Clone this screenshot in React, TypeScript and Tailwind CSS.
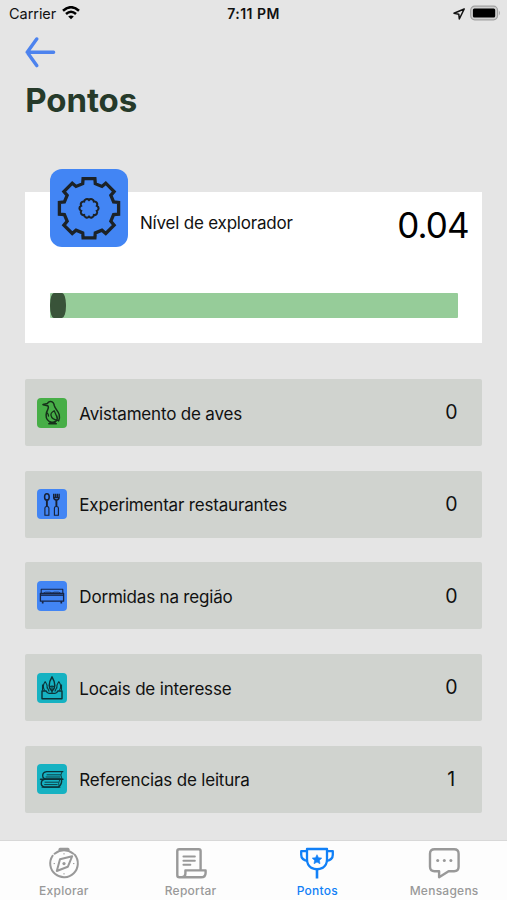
import * as React from "react";

// Outline of a toothed wheel, centered on cx/cy
const gearPath = (cx: number, cy: number, base: number, tip: number, half: number) => {
    const points: string[] = [];
    for (let i = 0; i < 8; i++) {
        const a = (i * Math.PI) / 4;
        [
            [-half, -base],
            [-half + 0.4, -tip],
            [half - 0.4, -tip],
            [half, -base],
        ].forEach(([x, y]) => {
            const px = cx + x * Math.cos(a) - y * Math.sin(a);
            const py = cy + x * Math.sin(a) + y * Math.cos(a);
            points.push(`${px.toFixed(2)} ${py.toFixed(2)}`);
        });
    }
    return `M${points.join("L")}Z`;
};

const scallopPath = (cx: number, cy: number, r: number, count: number) => {
    let d = "";
    for (let i = 0; i <= count; i++) {
        const a = (i * 2 * Math.PI) / count + Math.PI / count;
        const p = `${(cx + r * Math.cos(a)).toFixed(2)} ${(cy + r * Math.sin(a)).toFixed(2)}`;
        d += i === 0 ? `M${p}` : `A2.8 2.8 0 0 1 ${p}`;
    }
    return d + "Z";
};

const GearIcon = () => (
    <svg viewBox="0 0 78 78" className="w-full h-full" fill="none" stroke="#1c2227">
        <path d={gearPath(39, 39.3, 24.6, 29.6, 6.3)} strokeWidth="3.3" />
        <path d={scallopPath(39, 39.3, 8.3, 10)} strokeWidth="2.1" />
    </svg>
);

const BirdIcon = () => (
    <svg viewBox="0 0 30 30" className="w-full h-full" fill="none" stroke="#16301a" strokeWidth="1.5" strokeLinejoin="round" strokeLinecap="round">
        <path d="M6.2 6.600 10.300 5.600C11 3.900 12.400 3.300 13.800 3.500c2.200.3 3.200 2 3.500 4.200.5 2.600 3.900 5.300 4.900 8.900.5 2.200.3 4.500-.6 6.200" />
        <path d="M6.200 6.600c2 1.100 3.700.9 5 1.600 1 1.800-1 4-1.700 6.300-1 3.600.2 7.300 2.900 9.200 2.200.9 5 .7 6.600-.6 1.300-1.300 1.600-3.300.6-5.300" />
        <path d="M17.200 12.800c-2.400 1.300-3.600 2.700-3.200 4.600.4 2.200 3 4.500 7.400 5.300M9.900 14.700c1.300 1 1.700 2 1.600 3.300M17.200 12.800l2.100 4.800" strokeWidth="1.300" />
        <path d="M11.800 25.700h7.500M13.600 24l-.8 1.700M17.600 24l.9 1.700" />
    </svg>
);

const CutleryIcon = () => (
    <svg viewBox="0 0 30 30" className="w-full h-full" fill="none" stroke="#172033" strokeWidth="1.1">
        <ellipse cx="9.900" cy="7.900" rx="2.300" ry="3.200" strokeWidth="1.500" />
        <path d="M9.900 11.200v6.300" strokeWidth="1.900" />
        <path d="M7.900 26.200v-7.300q0-1.400 2-1.400t2 1.400v7.300z" />
        <path d="M16.700 4.800v3.600q0 2.400 2.700 2.600 2.700-.2 2.700-2.600V4.800M18.500 4.800v4M20.300 4.800v4M17 8.600h4.800" strokeWidth="1.400" />
        <path d="M19.400 11v6.500" strokeWidth="1.900" />
        <path d="M17.400 26.200v-7.300q0-1.400 2-1.400t2 1.400v7.300z" />
    </svg>
);

const BedIcon = () => (
    <svg viewBox="0 0 30 30" className="w-full h-full" fill="none" stroke="#172544" strokeWidth="1.100" strokeLinejoin="round">
        <path d="M4.200 12.500V8.200h21.600v4.300" />
        <path d="M3.400 12.300h23.200v7.900H3.400z" strokeWidth="1.300" />
        <path d="M3.600 14.100h22.800" strokeWidth="1.500" />
        <path d="M6.500 12l2-.8h4.500l2 .8 2-.8h4.500l2 .8" strokeWidth=".8" />
        <path d="M5.700 20.300v2.100M24.300 20.300v2.100" strokeWidth="1.700" />
    </svg>
);

const PlacesIcon = () => (
    <svg viewBox="0 0 30 30" className="w-full h-full" fill="none" stroke="#0c3338" strokeWidth="1.100" strokeLinejoin="round">
        <path d="M5 18h4.200q1 2.400 2.800 2.400h6q1.800 0 2.800-2.400H25v7.700H5z" strokeWidth="1.400" />
        <path d="M15 3.800c-1.700 2.800-2.900 5.600-2.800 8.700.1 2.400 1 4.300 2.800 5.600 1.800-1.300 2.700-3.200 2.800-5.600.1-3.100-1.100-5.900-2.800-8.700z" strokeWidth="1.500" />
        <path d="M15 12.500v7.500M12.500 13.800q2.500-1.700 5 0" />
        <path d="M8.200 8.500c-1.800 2.500-2.500 5.800-.7 9M8.200 8.500c1.400 1.800 2.200 4 2 7M5.500 11.500v6M10.300 14.500l1.900 4" />
        <path d="M21.800 8.500c1.800 2.500 2.500 5.800.7 9M21.800 8.500c-1.400 1.800-2.200 4-2 7M24.500 11.500v6M19.700 14.500l-1.900 4" />
    </svg>
);

const BooksIcon = () => (
    <svg viewBox="0 0 30 30" className="w-full h-full" fill="none" stroke="#0c3338" strokeWidth="1.200" strokeLinejoin="round" strokeLinecap="round">
        <path d="M25.800 7.600H9.600Q5.700 8.200 5.700 11.400T9 14.900h15.500" strokeWidth="1.400" />
        <path d="M24.800 7.900q-2 3 0 6.600M10 10.800h13.500M9 13h14" strokeWidth=".9" />
        <path d="M3.500 15.300h22.500M24.500 15.500q.7 4.600-3 7.500H7.200Q4 22.200 4.300 19T7 15.500" strokeWidth="1.400" />
        <path d="M8 18.200h13M7.600 20.600h12.600M5 23.300h18M22.500 16q-1.700 3.200-.4 6.600" strokeWidth=".9" />
    </svg>
);

const ExploreIcon = () => (
    <svg viewBox="0 0 34 34" className="w-[34px] h-[34px]" fill="none" stroke="currentColor" strokeWidth="2" strokeLinecap="round" strokeLinejoin="round">
        <path d="M5.600 9.700A13.800 13.800 0 1 0 27.700 8.700" />
        <path d="M7.600 7.700q9.400-7.200 18.800 0" />
        <path d="M13 3.200h8" strokeWidth="3" />
        <path d="M25.200 10.200 20.800 20.800 9.800 25l3.200-11.800z" />
        <circle cx="17" cy="17.600" r="1.600" fill="currentColor" stroke="none" />
        <path d="M17 7.500v.6M17 27.500v.6M7 17.600h.6M26.400 17.600h.6" strokeWidth="1" />
    </svg>
);

const ReportIcon = () => (
    <svg viewBox="0 0 34 34" className="w-[34px] h-[34px]" fill="none" stroke="currentColor" strokeWidth="2.400" strokeLinejoin="round" strokeLinecap="round">
        <path d="M26.600 23V5Q26.600 3.200 24.800 3.200H5.100Q3.300 3.200 3.300 5v24.300q0 2 2 2H27q4.600 0 4.600-4.300V24.400H11.400v3.200q0 3.200-3.200 3.700" />
        <path d="M9.400 10.500h11.500M9.400 14.700h11.500M9.400 18.800h7" strokeWidth="1.900" />
    </svg>
);

const TrophyIcon = () => (
    <svg viewBox="0 0 34 34" className="w-[34px] h-[34px]" fill="none" stroke="currentColor" strokeWidth="2.300" strokeLinejoin="round">
        <path d="M7 3h20v10.500q0 5.700-4.500 8.400Q17 24.600 11.500 21.900 7 19.200 7 13.500z" />
        <path d="M7.300 5.200H1.200v3.600q0 5.200 6.600 6.200M26.700 5.200h6.100v3.600q0 5.200-6.600 6.200" />
        <path d="M17 23.500v9" strokeWidth="2.600" />
        <path d="m17 8.700 1.500 3 3.300.4-2.400 2.300.6 3.300-3-1.600-3 1.600.6-3.300-2.400-2.300 3.300-.4z" fill="currentColor" strokeWidth=".6" />
    </svg>
);

const MessageIcon = () => (
    <svg viewBox="0 0 34 34" className="w-[34px] h-[34px]" fill="none" stroke="currentColor" strokeWidth="2.400" strokeLinejoin="round">
        <path d="M7.500 3.200h19.600q4.500 0 4.500 4.500v13q0 4.500-4.500 4.500h-5.500l-9.500 6v-6H7.500Q3 25.200 3 20.700v-13q0-4.500 4.500-4.500z" />
        <circle cx="10.700" cy="14.400" r="1.500" fill="currentColor" stroke="none" />
        <circle cx="17.300" cy="14.400" r="1.500" fill="currentColor" stroke="none" />
        <circle cx="23.900" cy="14.400" r="1.500" fill="currentColor" stroke="none" />
    </svg>
);

const categories = [
    { label: "Avistamento de aves", points: 0, color: "bg-[#47ae47]", icon: <BirdIcon /> },
    { label: "Experimentar restaurantes", points: 0, color: "bg-[#4285f4]", icon: <CutleryIcon /> },
    { label: "Dormidas na região", points: 0, color: "bg-[#4285f4]", icon: <BedIcon /> },
    { label: "Locais de interesse", points: 0, color: "bg-[#16b2c2]", icon: <PlacesIcon /> },
    { label: "Referencias de leitura", points: 1, color: "bg-[#16b2c2]", icon: <BooksIcon /> },
];

const tabs = [
    { label: "Explorar", icon: <ExploreIcon /> },
    { label: "Reportar", icon: <ReportIcon /> },
    { label: "Pontos", icon: <TrophyIcon /> },
    { label: "Mensagens", icon: <MessageIcon /> },
];

const StatusBar = () => (
    <div className="h-7 pl-[9px] pr-[6px] flex items-center text-[#111] leading-none">
        <div className="flex-1 flex items-center gap-[6px]">
            <span className="text-[14.5px] tracking-[-0.05px]">Carrier</span>
            <svg viewBox="0 0 18 14" className="w-[18px] h-[14px] -mt-[2px]" fill="none" stroke="#000" strokeWidth="2.500">
                <path d="M1 4.800q8-7.200 16 0M4 8q5-4.500 10 0" />
                <path d="M9 13.300 6.200 10.500q2.800-2 5.600 0z" fill="#000" stroke="none" />
            </svg>
        </div>
        <span className="-ml-[3px] text-[14px] font-semibold tracking-[0.45px]">7:11 PM</span>
        <div className="flex-1 flex items-center justify-end gap-[5px]">
            <svg viewBox="0 0 12 12" className="w-3 h-3 -mt-[1px]" fill="none" stroke="#111" strokeWidth="1.500" strokeLinejoin="round">
                <path d="M11.200 1 1 5.300l4.800.9.500 4.800z" />
            </svg>
            <svg viewBox="0 0 31 16" className="w-[31px] h-4 -mt-[2px]">
                <rect x=".7" y="1.200" width="26.800" height="13.600" rx="4" fill="#d0d0d0" stroke="#a1a1a1" strokeWidth="1.200" />
                <rect x="2.900" y="3.600" width="22.300" height="9" rx="1.500" fill="#000" />
                <path d="M28.900 5.500q2 2.500 0 5z" fill="#a1a1a1" />
            </svg>
        </div>
    </div>
);

const App = () => {
    const [tab, setTab] = React.useState("Pontos");

    return (
        <div className="w-[507px] h-[900px] overflow-hidden flex flex-col bg-[#e5e5e5] text-[#111] font-['Inter',sans-serif]">
            <StatusBar />

            <div className="flex-1 pl-[25.300px] pr-[24.700px]">
                <button className="block mt-[9px]" aria-label="Voltar">
                    <svg viewBox="0 0 31 31" className="w-[31px] h-[31px]" fill="none" stroke="#4d83ee" strokeWidth="3.400" strokeLinecap="round" strokeLinejoin="round">
                        <path d="M11.700 2 2.200 15.300 11.700 28.600M2.200 15.300h26.400" />
                    </svg>
                </button>
                <h1 className="mt-[12px] h-10 leading-10 text-[33px] font-bold tracking-[-0.1px] text-[#263a2a]">Pontos</h1>

                <div className="mt-[72px] h-[150.500px] bg-white px-[24.700px]">
                    <div className="flex">
                        <div className="-mt-[23px] w-[78px] h-[78px] rounded-[12px] bg-[#4285f4]">
                            <GearIcon />
                        </div>
                        <span className="ml-[12px] mt-[19px] text-[17px] leading-6 tracking-[-0.2px]">Nível de explorador</span>
                        <span className="ml-auto -mr-[11px] mt-[13px] text-[35px] leading-10 tracking-[-0.9px] text-black">0.04</span>
                    </div>
                    <div className="mt-[46px] h-[25px] rounded-[1px] bg-[#96cc99]">
                        <div className="h-full w-[16px] rounded-[4px/12px] bg-[#395339]" />
                    </div>
                </div>

                <div className="mt-[36.500px] flex flex-col gap-[24.700px]">
                    {categories.map((c) => (
                        <div key={c.label} className="h-[67px] rounded-[2px] bg-[#d0d3cf] pl-[12px] pr-[19px] flex items-center">
                            <div className={`w-[30px] h-[30px] rounded-[4px] ${c.color}`}>{c.icon}</div>
                            <span className="ml-[12px] mt-[2px] text-[17px] leading-6 tracking-[-0.18px]">{c.label}</span>
                            <span className="ml-auto mt-[1px] w-6 text-center text-[19.500px]">{c.points}</span>
                        </div>
                    ))}
                </div>
            </div>

            <div className="h-[60px] bg-[#fdfdfd] border-t border-[#d8d8d8] grid grid-cols-4">
                {tabs.map((t) => (
                    <button
                        key={t.label}
                        onClick={() => setTab(t.label)}
                        className={`flex flex-col items-center pt-[5px] pl-[1px] ${
                            tab == t.label ? "text-[#1180f7]" : "text-[#999]"
                        }`}
                    >
                        {t.icon}
                        <span className="mt-[3px] text-[12px] leading-4 font-medium tracking-[0.25px]">{t.label}</span>
                    </button>
                ))}
            </div>
        </div>
    );
};

export default App;
